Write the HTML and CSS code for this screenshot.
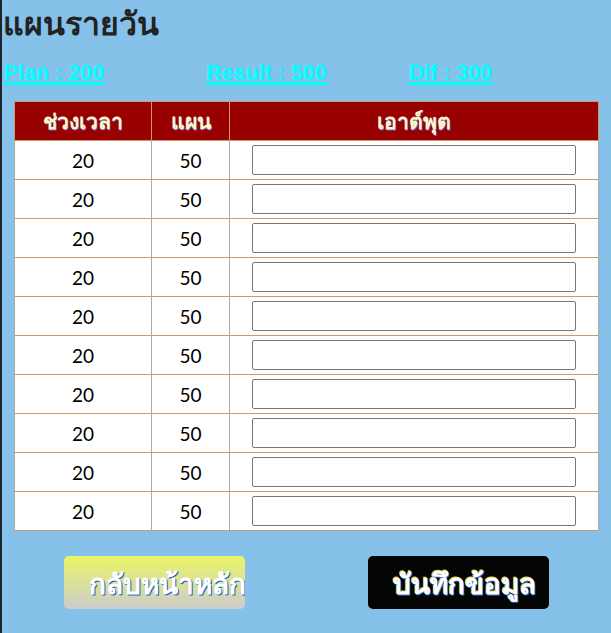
FILE: index.html
```html
<!DOCTYPE html>
<html lang="th">
<head>
<meta charset="utf-8">
<title>แผนรายวัน</title>
<link rel="stylesheet" href="styles.css">
</head>
<body>
<h1 class="title">แผนรายวัน</h1>
<div class="stats">
  <a class="stat" href="#">Plan : 200</a>
  <a class="stat" href="#">Result : 500</a>
  <a class="stat" href="#">Dif : 300</a>
</div>
<table class="plan">
  <thead>
    <tr><th class="c1">ช่วงเวลา</th><th class="c2">แผน</th><th class="c3">เอาต์พุต</th></tr>
  </thead>
  <tbody>
    <tr><td>20</td><td>50</td><td><input class="out" type="text"></td></tr>
    <tr><td>20</td><td>50</td><td><input class="out" type="text"></td></tr>
    <tr><td>20</td><td>50</td><td><input class="out" type="text"></td></tr>
    <tr><td>20</td><td>50</td><td><input class="out" type="text"></td></tr>
    <tr><td>20</td><td>50</td><td><input class="out" type="text"></td></tr>
    <tr><td>20</td><td>50</td><td><input class="out" type="text"></td></tr>
    <tr><td>20</td><td>50</td><td><input class="out" type="text"></td></tr>
    <tr><td>20</td><td>50</td><td><input class="out" type="text"></td></tr>
    <tr><td>20</td><td>50</td><td><input class="out" type="text"></td></tr>
    <tr><td>20</td><td>50</td><td><input class="out" type="text"></td></tr>
  </tbody>
</table>
<div class="actions">
  <div class="cell"><button class="btn btn-back" type="button">กลับหน้าหลัก</button></div>
  <div class="cell"><button class="btn btn-save" type="button">บันทึกข้อมูล</button></div>
</div>
</body>
</html>
```
FILE: styles.css
```css
html, body {
  margin: 0;
  padding: 0;
}
body {
  background: #85c1e9;
  border-left: 2px solid #1b2631;
  min-height: 633px;
  box-sizing: border-box;
  font-family: "Noto Sans", "Liberation Sans", sans-serif;
}
.title {
  margin: 0;
  padding: 0 0 0 1px;
  font-size: 32px;
  font-weight: bold;
  line-height: 46px;
  color: #222;
}
.stats {
  display: grid;
  grid-template-columns: repeat(3, 1fr);
  padding-left: 2px;
  margin-top: 13px;
  height: 28px;
}
.stat {
  font-family: "Liberation Sans", Arial, sans-serif;
  font-weight: bold;
  font-size: 21.5px;
  line-height: 28px;
  color: #00ffff;
  text-decoration: underline;
  text-decoration-thickness: 3px;
  text-underline-offset: 2px;
}
.plan {
  margin: 14px 0 0 12px;
  width: 585px;
  border-collapse: collapse;
  border: 1px solid #cf9a6a;
  background: #fff;
}
.plan th {
  background: #990000;
  color: #fff7c2;
  font-size: 21px;
  font-weight: bold;
  height: 38px;
  padding: 0;
  line-height: 28px;
  border: 1px solid #cf9a6a;
  text-shadow: 1px 1px 0 #6a5acd;
}
.plan .c1 { width: 136px; }
.plan .c2 { width: 77px; }
.plan td {
  height: 38px;
  padding: 0;
  text-align: center;
  font-family: Lato, "Noto Sans", sans-serif;
  font-size: 19px;
  color: #000;
  border-top: 1px solid #cf9a6a;
  border-bottom: 1px solid #cf9a6a;
  border-left: 1px solid #aaa;
  border-right: 1px solid #aaa;
}
.out {
  display: block;
  margin: 0 auto;
  width: 324px;
  height: 30px;
  box-sizing: border-box;
  border: 1px solid #767676;
  border-radius: 2px;
  background: #fff;
}
.actions {
  display: grid;
  grid-template-columns: 1fr 1fr;
  margin-top: 25px;
}
.cell {
  display: flex;
  justify-content: center;
}
.btn {
  width: 181px;
  height: 53px;
  border: none;
  border-radius: 5px;
  padding: 0 0 0 25px;
  text-align: left;
  overflow: hidden;
  white-space: nowrap;
  font-family: "Noto Sans", sans-serif;
  font-weight: bold;
  font-size: 28px;
  line-height: 36px;
  color: #fff;
}
.btn-back {
  background: linear-gradient(#eaf565, #cccccc);
  text-shadow: 1px 1px 0 #1560d0;
}
.btn-save {
  background: #050505;
  text-shadow: 1px 1px 0 #1e6ee8, -1px -1px 0 #e8d23a;
}
```
